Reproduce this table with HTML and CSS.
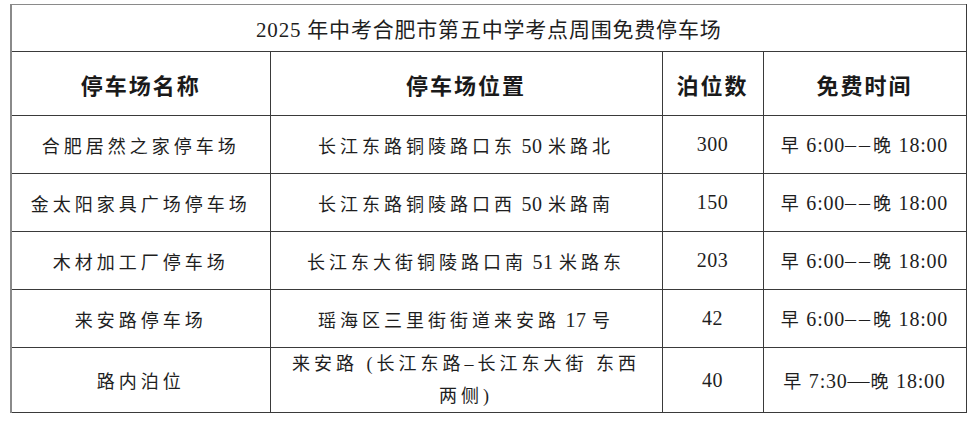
FILE: index.html
```html
<!DOCTYPE html>
<html lang="zh-CN">
<head>
<meta charset="utf-8">
<title>2025年中考合肥市第五中学考点周围免费停车场</title>
<link rel="stylesheet" href="styles.css">
</head>
<body>
<div class="page">
  <table class="parking">
    <colgroup>
      <col class="c-name">
      <col class="c-loc">
      <col class="c-num">
      <col class="c-time">
    </colgroup>
    <tr class="r-title">
      <td colspan="4" class="title">2025 年中考合肥市第五中学考点周围免费停车场</td>
    </tr>
    <tr class="r-head">
      <th>停车场名称</th>
      <th>停车场位置</th>
      <th>泊位数</th>
      <th>免费时间</th>
    </tr>
    <tr class="r-row">
      <td>合肥居然之家停车场</td>
      <td>长江东路铜陵路口东<span class="n"> 50 </span>米路北</td>
      <td class="num"><span class="n">300</span></td>
      <td class="time">早 <span class="n">6:00</span><span class="d">––</span>晚 <span class="n">18:00</span></td>
    </tr>
    <tr class="r-row">
      <td>金太阳家具广场停车场</td>
      <td>长江东路铜陵路口西<span class="n"> 50 </span>米路南</td>
      <td class="num"><span class="n">150</span></td>
      <td class="time">早 <span class="n">6:00</span><span class="d">––</span>晚 <span class="n">18:00</span></td>
    </tr>
    <tr class="r-row">
      <td>木材加工厂停车场</td>
      <td>长江东大街铜陵路口南<span class="n"> 51 </span>米路东</td>
      <td class="num"><span class="n">203</span></td>
      <td class="time">早 <span class="n">6:00</span><span class="d">––</span>晚 <span class="n">18:00</span></td>
    </tr>
    <tr class="r-row">
      <td>来安路停车场</td>
      <td>瑶海区三里街街道来安路<span class="n"> 17 </span>号</td>
      <td class="num"><span class="n">42</span></td>
      <td class="time">早 <span class="n">6:00</span><span class="d">––</span>晚 <span class="n">18:00</span></td>
    </tr>
    <tr class="r-last">
      <td>路内泊位</td>
      <td class="two">来安路 (长江东路–长江东大街 东西<br>两侧)</td>
      <td class="num"><span class="n">40</span></td>
      <td class="time">早 <span class="n">7:30</span><span class="em">—</span>晚 <span class="n">18:00</span></td>
    </tr>
  </table>
</div>
</body>
</html>
```
FILE: styles.css
```css
html, body {
  margin: 0;
  padding: 0;
  background: #ffffff;
}

.page {
  padding: 4px 0 0 10px;
}

.parking {
  border-collapse: collapse;
  table-layout: fixed;
  width: 955px;
  color: #1e1e1e;
  font-family: "Liberation Serif", "Noto Sans CJK SC", serif;
}

.c-name { width: 259px; }
.c-loc { width: 392px; }
.c-num { width: 101px; }
.c-time { width: 203px; }

.parking td,
.parking th {
  border: 1px solid #3a3a3a;
  padding: 0;
  text-align: center;
  vertical-align: middle;
  white-space: nowrap;
}

.parking tr > :first-child {
  border-left: 2px solid #8a8a8a;
}

.r-title td {
  border-top: 1px solid #8a8a8a;
}

.r-title { height: 47px; }
.r-head { height: 64px; }
.r-row { height: 58px; }
.r-last { height: 65px; }

.title {
  font-size: 21px;
  font-weight: 400;
  letter-spacing: 0.8px;
  padding-top: 2px;
}

.r-head th {
  font-family: "Noto Sans CJK SC", sans-serif;
  font-size: 22px;
  font-weight: 700;
  letter-spacing: 2px;
  color: #1a1a1a;
}

.r-row td,
.r-last td {
  font-size: 18px;
  letter-spacing: 4px;
}

.n {
  font-size: 20px;
  letter-spacing: 0.5px;
}

.time {
  letter-spacing: 1.5px !important;
}

.time .n {
  letter-spacing: 0.8px;
}

.d {
  font-size: 22px;
  letter-spacing: 3px;
}

.em {
  font-size: 22px;
  letter-spacing: 0;
  margin-right: 1px;
}

.two {
  line-height: 32px;
  white-space: normal;
}
```
